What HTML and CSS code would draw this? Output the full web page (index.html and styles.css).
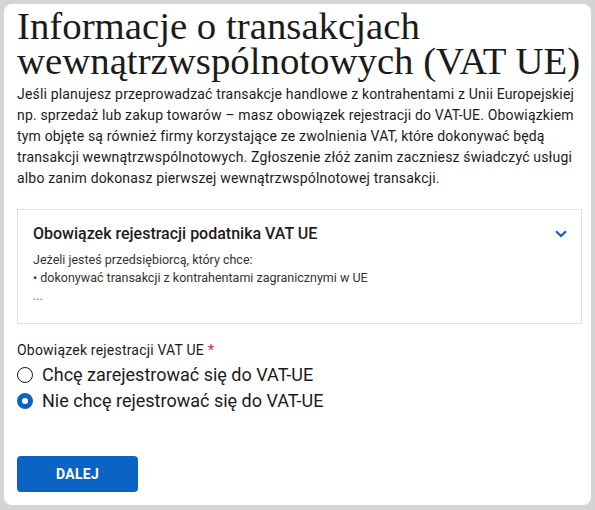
FILE: index.html
```html
<!DOCTYPE html>
<html lang="pl">
<head>
<meta charset="utf-8">
<link rel="stylesheet" href="styles.css">
</head>
<body>
<main class="card">
  <h1 class="title">Informacje o transakcjach wewnątrzwspólnotowych (VAT UE)</h1>
  <p class="intro">Jeśli planujesz przeprowadzać transakcje handlowe z kontrahentami z Unii Europejskiej np. sprzedaż lub zakup towarów – masz obowiązek rejestracji do VAT-UE. Obowiązkiem tym objęte są również firmy korzystające ze zwolnienia VAT, które dokonywać będą transakcji wewnątrzwspólnotowych. Zgłoszenie złóż zanim zaczniesz świadczyć usługi albo zanim dokonasz pierwszej wewnątrzwspólnotowej transakcji.</p>

  <section class="accordion">
    <div class="acc-head">
      <h2 class="acc-title">Obowiązek rejestracji podatnika VAT UE</h2>
      <svg class="chevron" width="12" height="8" viewBox="0 0 12 8" aria-hidden="true"><path d="M1 1.2 L6 6 L11 1.2" fill="none" stroke="#0b63c4" stroke-width="2.2"/></svg>
    </div>
    <div class="acc-body">
      <p>Jeżeli jesteś przedsiębiorcą, który chce:</p>
      <p>• dokonywać transakcji z kontrahentami zagranicznymi w UE</p>
      <p class="more">...</p>
    </div>
  </section>

  <fieldset class="field">
    <legend class="field-label">Obowiązek rejestracji VAT UE<span class="req">*</span></legend>
    <label class="radio"><input type="radio" name="vat"><span class="mark"></span>Chcę zarejestrować się do VAT-UE</label>
    <label class="radio"><input type="radio" name="vat" checked><span class="mark"></span>Nie chcę rejestrować się do VAT-UE</label>
  </fieldset>

  <button class="btn" type="button">DALEJ</button>
</main>
</body>
</html>
```

FILE: styles.css
```css
html, body {
  margin: 0;
  background: #d4d4d4;
}
body {
  padding: 4px;
  font-family: Roboto, "Liberation Sans", sans-serif;
  color: #1b1b1b;
}
.card {
  box-sizing: border-box;
  width: 587px;
  height: 501px;
  background: #fff;
  border-radius: 8px;
  padding: 4px 9px 0 13px;
}
.title {
  margin: 0;
  font-family: "Liberation Serif", serif;
  font-weight: 400;
  font-size: 38.8px;
  line-height: 35px;
  color: #1b1b1b;
}
.intro {
  margin: 6px 0 0;
  font-size: 14px;
  line-height: 21px;
  letter-spacing: 0.17px;
  color: #1b1b1b;
}
.accordion {
  margin-top: 20px;
  border: 1px solid #e0e0e0;
  padding: 12px 14px 18px 15px;
}
.acc-head {
  display: flex;
  align-items: center;
  justify-content: space-between;
}
.acc-title {
  margin: 0;
  font-size: 16px;
  font-weight: 500;
  line-height: 24px;
  color: #1b1b1b;
}
.chevron {
  display: block;
}
.acc-body {
  margin-top: 5px;
  font-size: 12.5px;
  line-height: 18px;
  color: #333;
}
.acc-body p {
  margin: 0;
}
.acc-body .more {
  color: #5b6f8f;
}
.field {
  margin: 16px 0 0;
  padding: 0;
  border: 0;
}
.field-label {
  padding: 0;
  font-size: 14px;
  line-height: 20px;
  letter-spacing: 0.2px;
  color: #1b1b1b;
  margin-bottom: 2px;
}
.req {
  color: #d5233b;
  margin-left: 4px;
}
.radio {
  display: flex;
  align-items: center;
  gap: 9px;
  font-size: 18px;
  line-height: 26px;
  color: #1b1b1b;
}
.radio input {
  display: none;
}
.mark {
  box-sizing: border-box;
  width: 16px;
  height: 16px;
  border-radius: 50%;
  border: 1.5px solid #1b1b1b;
  flex: none;
}
.radio input:checked + .mark {
  border: 5px solid #0b63c4;
  background: #fff;
}
.btn {
  display: block;
  margin-top: 42px;
  width: 121px;
  height: 36px;
  border: 0;
  border-radius: 4px;
  background: #0b63c4;
  color: #fff;
  font-family: Roboto, "Liberation Sans", sans-serif;
  font-weight: 700;
  font-size: 14px;
  letter-spacing: 0.3px;
}
```
